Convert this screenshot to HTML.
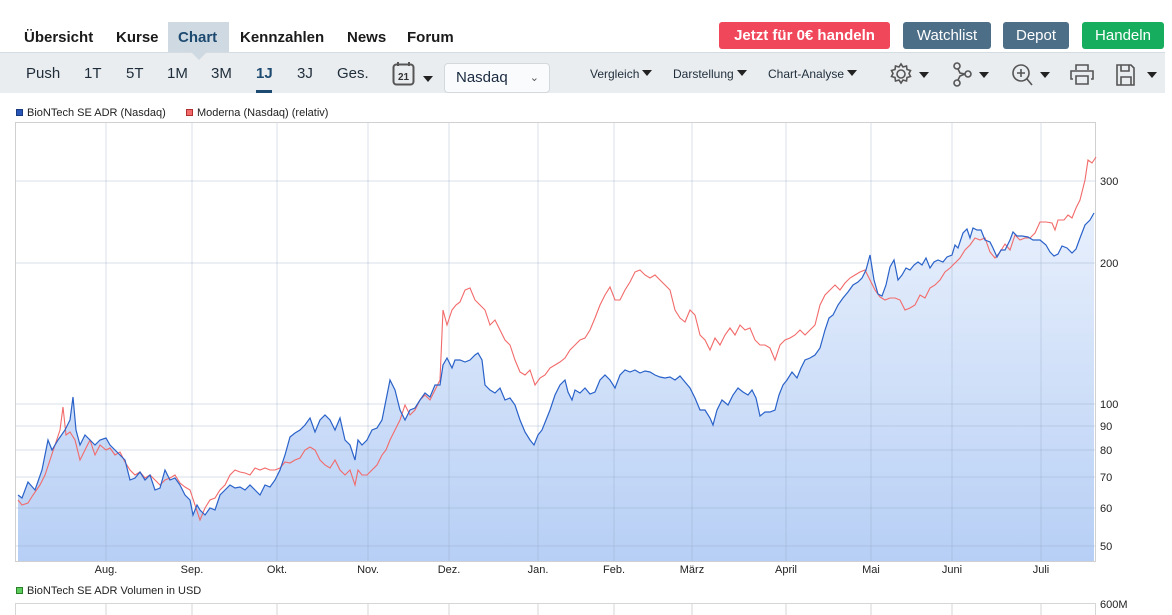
<!DOCTYPE html>
<html><head><meta charset="utf-8"><style>
*{margin:0;padding:0;box-sizing:border-box}
body{width:1172px;height:615px;overflow:hidden;background:#fff;font-family:"Liberation Sans",sans-serif;position:relative;color:#222}
.a{position:absolute;white-space:nowrap}
.nav{font-weight:bold;font-size:15px;top:29px;color:#1a1a1a}
.btn{position:absolute;top:22px;height:27px;border-radius:3px;color:#fff;font-size:15px;text-align:center;line-height:27px}
.tb{top:65px;font-size:15px;color:#1f2d3a}
.sm{font-size:12px;top:67px;color:#1f2d3a}
.tri{display:inline-block;width:0;height:0;border-left:5px solid transparent;border-right:5px solid transparent;border-top:6px solid #222;margin-left:3px;vertical-align:2px}
.ax{font-size:11px;color:#222}
</style></head><body>
<div class="a" style="left:168px;top:22px;width:61px;height:31px;background:#cfd9e2"></div>
<div class="a" style="left:0;top:52px;width:1165px;height:41px;background:#e9edf0;border-top:1px solid #d5dde3"></div>
<div class="a" style="left:191px;top:52px;width:0;height:0;border-left:8px solid transparent;border-right:8px solid transparent;border-top:8px solid #cfd9e2"></div>
<div class="a nav" style="left:24px">Übersicht</div>
<div class="a nav" style="left:116px">Kurse</div>
<div class="a nav" style="left:178px;color:#1d4a70">Chart</div>
<div class="a nav" style="left:240px">Kennzahlen</div>
<div class="a nav" style="left:347px">News</div>
<div class="a nav" style="left:407px">Forum</div>
<div class="btn" style="left:719px;width:171px;background:#f0475a;font-weight:bold">Jetzt für 0€ handeln</div>
<div class="btn" style="left:903px;width:88px;background:#4d6e87">Watchlist</div>
<div class="btn" style="left:1003px;width:66px;background:#4d6e87">Depot</div>
<div class="btn" style="left:1082px;width:82px;background:#16ad5e">Handeln</div>
<div class="a tb" style="left:26px">Push</div>
<div class="a tb" style="left:84px">1T</div>
<div class="a tb" style="left:126px">5T</div>
<div class="a tb" style="left:167px">1M</div>
<div class="a tb" style="left:211px">3M</div>
<div class="a tb" style="left:256px;font-weight:bold;color:#1d4a70">1J</div>
<div class="a" style="left:256px;top:90px;width:16px;height:3px;background:#1d4a70"></div>
<div class="a tb" style="left:297px">3J</div>
<div class="a tb" style="left:337px">Ges.</div>
<svg class="a" style="left:392px;top:61px" width="24" height="26" viewBox="0 0 24 26"><rect x="1.5" y="3.5" width="20" height="20" rx="3" fill="none" stroke="#555" stroke-width="2"/><line x1="6" y1="1" x2="6" y2="5" stroke="#555" stroke-width="2"/><line x1="17" y1="1" x2="17" y2="5" stroke="#555" stroke-width="2"/><text x="11.5" y="19" font-size="10" font-weight="bold" text-anchor="middle" fill="#333" font-family="Liberation Sans">21</text></svg>
<div class="a" style="left:420px;top:71px"><span class="tri"></span></div>
<div class="a" style="left:444px;top:63px;width:106px;height:30px;background:#fafbfc;border:1px solid #d3d8dc;border-radius:4px;font-size:15px;line-height:28px;padding-left:11px;color:#1a2a40">Nasdaq<span style="position:absolute;right:10px;top:0;font-size:11px;color:#555">&#8964;</span></div>
<div class="a sm" style="left:590px">Vergleich<span class="tri"></span></div>
<div class="a sm" style="left:673px">Darstellung<span class="tri"></span></div>
<div class="a sm" style="left:768px">Chart-Analyse<span class="tri"></span></div>
<svg class="a" style="left:888px;top:62px" width="270" height="26" viewBox="0 0 270 26" fill="none" stroke="#555" stroke-width="1.6">
<circle cx="13" cy="12" r="4"/><path d="M13 2l2 3 3.5-1 .5 3.5 3.5 1-1.5 3 1.5 3-3.5 1-.5 3.5-3.5-1-2 3-2-3-3.5 1-.5-3.5-3.5-1 1.5-3-1.5-3 3.5-1 .5-3.5 3.5 1z"/>
<path d="M31 10l10 0-5 6z" fill="#222" stroke="none"/>
<circle cx="69" cy="4" r="3"/><circle cx="80" cy="12" r="3"/><circle cx="69" cy="21" r="3"/><path d="M70 7l2 4 5 1M70 18l2-4 5-2"/>
<path d="M91 10l10 0-5 6z" fill="#222" stroke="none"/>
<circle cx="133" cy="11" r="8"/><path d="M139 17l5 6M129 11h8M133 7v8"/>
<path d="M152 10l10 0-5 6z" fill="#222" stroke="none"/>
<path d="M188 8V3h12v5M185 17h-2v-8h22v8h-2M188 14h12v8h-12z"/>
<path d="M229 3h14l3 3v17h-17zM233 3v6h8V3M233 23v-8h10v8"/>
<path d="M259 10l10 0-5 6z" fill="#222" stroke="none"/>
</svg>
<div class="a" style="left:16px;top:107px;font-size:11px"><span style="display:inline-block;width:7px;height:7px;background:#2856b8;border:1px solid #1a3a80;margin-right:4px"></span>BioNTech SE ADR (Nasdaq)</div>
<div class="a" style="left:186px;top:107px;font-size:11px"><span style="display:inline-block;width:7px;height:7px;background:#f26a6a;border:1px solid #b03030;margin-right:4px"></span>Moderna (Nasdaq) (relativ)</div>
<svg class="a" style="left:0;top:0" width="1172" height="615">
<defs><linearGradient id="g" x1="0" y1="122" x2="0" y2="561" gradientUnits="userSpaceOnUse"><stop offset="0" stop-color="#f4f8fe"/><stop offset="1" stop-color="#b7cff5"/></linearGradient></defs>
<polygon fill="url(#g)" points="18,561 18,495 22,498 28,482 35,490 42,470 48,440 52,450 58,440 65,430 70,420 73,397 76,430 80,445 85,435 90,440 95,445 100,440 106,438 110,445 115,450 120,455 125,460 130,480 135,478 140,472 145,480 150,475 155,490 160,488 165,470 170,480 175,478 180,485 185,495 190,500 193,515 197,505 200,510 205,515 210,508 215,510 220,495 225,490 230,485 235,488 240,487 245,490 250,485 255,490 260,495 265,485 270,487 275,480 280,470 285,455 290,437 295,433 300,430 305,425 310,418 315,432 320,420 325,415 330,420 335,430 340,418 345,440 350,445 355,460 358,440 362,445 367,440 372,430 377,428 382,420 386,400 390,380 395,390 400,410 405,420 410,410 415,408 420,400 425,393 430,397 435,385 440,385 443,365 447,358 452,368 455,360 460,360 465,362 470,360 475,355 478,353 482,360 485,385 490,390 495,393 500,388 505,400 510,398 515,405 520,420 525,432 530,440 534,445 538,435 542,430 546,420 550,410 555,395 560,385 565,380 568,392 572,400 575,390 580,393 585,388 590,394 595,392 600,380 605,375 610,380 615,388 620,375 625,370 630,372 635,370 640,373 645,371 650,372 655,375 660,377 665,378 670,377 675,380 680,376 685,382 690,388 695,398 700,410 705,410 710,418 713,425 717,410 722,400 728,405 733,395 738,388 743,392 748,395 752,390 756,398 760,416 765,412 770,412 775,410 779,395 783,385 787,380 792,372 797,378 801,368 805,360 810,358 815,355 820,348 825,330 829,318 833,315 838,305 843,298 848,292 853,285 858,282 862,278 866,270 870,255 874,280 878,294 882,296 886,285 890,267 894,260 898,280 902,275 906,268 910,270 914,265 918,262 922,265 926,258 930,268 934,262 938,260 943,262 947,257 952,255 955,245 958,248 963,233 967,229 970,238 973,228 977,230 981,230 985,240 990,242 993,248 997,257 1001,250 1005,250 1010,240 1013,232 1017,236 1022,236 1028,237 1033,240 1040,240 1046,245 1050,252 1054,256 1058,254 1062,246 1067,248 1072,253 1076,249 1080,238 1085,225 1090,220 1094,213 1094,561"/>
<g stroke="#8fa3c0" stroke-opacity="0.35" stroke-width="1">
<line x1="16" y1="181" x2="1096" y2="181"/><line x1="16" y1="263" x2="1096" y2="263"/><line x1="16" y1="404" x2="1096" y2="404"/><line x1="16" y1="426" x2="1096" y2="426"/><line x1="16" y1="450" x2="1096" y2="450"/><line x1="16" y1="477" x2="1096" y2="477"/><line x1="16" y1="508" x2="1096" y2="508"/><line x1="16" y1="546" x2="1096" y2="546"/>
<line x1="106" y1="122" x2="106" y2="561"/><line x1="192" y1="122" x2="192" y2="561"/><line x1="277" y1="122" x2="277" y2="561"/><line x1="368" y1="122" x2="368" y2="561"/><line x1="449" y1="122" x2="449" y2="561"/><line x1="538" y1="122" x2="538" y2="561"/><line x1="614" y1="122" x2="614" y2="561"/><line x1="692" y1="122" x2="692" y2="561"/><line x1="786" y1="122" x2="786" y2="561"/><line x1="871" y1="122" x2="871" y2="561"/><line x1="952" y1="122" x2="952" y2="561"/><line x1="1041" y1="122" x2="1041" y2="561"/>
</g>
<rect x="15.5" y="122.5" width="1080" height="439" fill="none" stroke="#d0d0d0"/>
<g stroke="#d6d6d6"><line x1="15" y1="603.5" x2="1096" y2="603.5"/><line x1="15.5" y1="603" x2="15.5" y2="615"/><line x1="1095.5" y1="603" x2="1095.5" y2="615"/><line x1="106" y1="603" x2="106" y2="615"/><line x1="192" y1="603" x2="192" y2="615"/><line x1="277" y1="603" x2="277" y2="615"/><line x1="368" y1="603" x2="368" y2="615"/><line x1="449" y1="603" x2="449" y2="615"/><line x1="538" y1="603" x2="538" y2="615"/><line x1="614" y1="603" x2="614" y2="615"/><line x1="692" y1="603" x2="692" y2="615"/><line x1="786" y1="603" x2="786" y2="615"/><line x1="871" y1="603" x2="871" y2="615"/><line x1="952" y1="603" x2="952" y2="615"/><line x1="1041" y1="603" x2="1041" y2="615"/></g>
<polyline fill="none" stroke="#f26a6a" stroke-width="1.1" points="18,500 22,505 28,503 33,495 40,485 45,475 50,460 55,445 60,430 63,407 66,435 70,432 75,440 80,460 85,450 90,440 95,455 100,445 106,450 110,448 115,455 120,452 125,462 130,470 135,475 140,472 145,478 150,475 155,480 160,485 165,480 170,478 175,475 180,483 185,487 190,490 195,505 200,520 205,508 210,500 215,498 220,490 225,485 230,475 235,470 240,472 245,473 250,475 255,468 260,470 265,468 270,470 275,470 280,468 285,462 290,463 295,460 300,458 305,450 310,447 315,450 320,460 325,465 330,468 335,460 340,470 345,475 350,470 355,485 358,470 362,475 367,475 372,470 377,465 382,455 386,450 390,440 395,430 400,420 405,405 410,415 415,410 420,400 425,395 430,400 435,390 440,380 443,310 447,325 452,310 456,305 460,302 465,290 470,288 475,300 480,305 485,310 490,325 495,320 500,330 505,340 510,345 515,360 520,372 525,375 530,370 535,385 540,378 545,375 550,368 555,365 560,362 565,358 570,350 575,345 580,340 585,338 590,330 595,318 600,305 605,295 610,287 615,300 620,300 625,290 630,282 635,272 640,270 645,275 650,278 655,275 660,280 665,285 670,290 675,310 680,318 685,322 690,310 695,315 700,335 705,340 710,350 715,338 720,345 725,335 730,328 735,335 740,325 745,330 750,328 755,340 760,345 765,345 770,348 775,360 780,345 785,340 790,338 795,335 800,330 805,335 810,330 815,325 820,305 825,295 830,290 835,285 840,290 845,283 850,278 855,275 860,272 865,270 870,280 875,290 880,297 885,300 890,298 895,298 900,300 905,310 910,308 915,305 920,295 925,298 930,288 935,285 940,280 945,272 950,268 955,263 960,258 965,250 970,245 975,238 980,240 985,238 990,252 995,258 1000,252 1005,244 1010,250 1015,235 1020,240 1025,238 1030,238 1035,233 1040,222 1046,222 1052,223 1055,230 1058,220 1064,220 1068,215 1072,218 1076,208 1080,200 1085,180 1088,160 1092,163 1096,157"/>
<polyline fill="none" stroke="#2a62c9" stroke-width="1.2" points="18,495 22,498 28,482 35,490 42,470 48,440 52,450 58,440 65,430 70,420 73,397 76,430 80,445 85,435 90,440 95,445 100,440 106,438 110,445 115,450 120,455 125,460 130,480 135,478 140,472 145,480 150,475 155,490 160,488 165,470 170,480 175,478 180,485 185,495 190,500 193,515 197,505 200,510 205,515 210,508 215,510 220,495 225,490 230,485 235,488 240,487 245,490 250,485 255,490 260,495 265,485 270,487 275,480 280,470 285,455 290,437 295,433 300,430 305,425 310,418 315,432 320,420 325,415 330,420 335,430 340,418 345,440 350,445 355,460 358,440 362,445 367,440 372,430 377,428 382,420 386,400 390,380 395,390 400,410 405,420 410,410 415,408 420,400 425,393 430,397 435,385 440,385 443,365 447,358 452,368 455,360 460,360 465,362 470,360 475,355 478,353 482,360 485,385 490,390 495,393 500,388 505,400 510,398 515,405 520,420 525,432 530,440 534,445 538,435 542,430 546,420 550,410 555,395 560,385 565,380 568,392 572,400 575,390 580,393 585,388 590,394 595,392 600,380 605,375 610,380 615,388 620,375 625,370 630,372 635,370 640,373 645,371 650,372 655,375 660,377 665,378 670,377 675,380 680,376 685,382 690,388 695,398 700,410 705,410 710,418 713,425 717,410 722,400 728,405 733,395 738,388 743,392 748,395 752,390 756,398 760,416 765,412 770,412 775,410 779,395 783,385 787,380 792,372 797,378 801,368 805,360 810,358 815,355 820,348 825,330 829,318 833,315 838,305 843,298 848,292 853,285 858,282 862,278 866,270 870,255 874,280 878,294 882,296 886,285 890,267 894,260 898,280 902,275 906,268 910,270 914,265 918,262 922,265 926,258 930,268 934,262 938,260 943,262 947,257 952,255 955,245 958,248 963,233 967,229 970,238 973,228 977,230 981,230 985,240 990,242 993,248 997,257 1001,250 1005,250 1010,240 1013,232 1017,236 1022,236 1028,237 1033,240 1040,240 1046,245 1050,252 1054,256 1058,254 1062,246 1067,248 1072,253 1076,249 1080,238 1085,225 1090,220 1094,213"/>
<g font-family="Liberation Sans" font-size="11" fill="#222">
<text x="1100" y="185">300</text><text x="1100" y="267">200</text><text x="1100" y="408">100</text><text x="1100" y="430">90</text><text x="1100" y="454">80</text><text x="1100" y="481">70</text><text x="1100" y="512">60</text><text x="1100" y="550">50</text><text x="1100" y="608">600M</text>
<g text-anchor="middle"><text x="106" y="573">Aug.</text><text x="192" y="573">Sep.</text><text x="277" y="573">Okt.</text><text x="368" y="573">Nov.</text><text x="449" y="573">Dez.</text><text x="538" y="573">Jan.</text><text x="614" y="573">Feb.</text><text x="692" y="573">März</text><text x="786" y="573">April</text><text x="871" y="573">Mai</text><text x="952" y="573">Juni</text><text x="1041" y="573">Juli</text></g>
</g>
</svg>
<div class="a" style="left:16px;top:585px;font-size:11px"><span style="display:inline-block;width:7px;height:7px;background:#5ccc5c;border:1px solid #2a802a;margin-right:4px"></span>BioNTech SE ADR Volumen in USD</div>
</body></html>
